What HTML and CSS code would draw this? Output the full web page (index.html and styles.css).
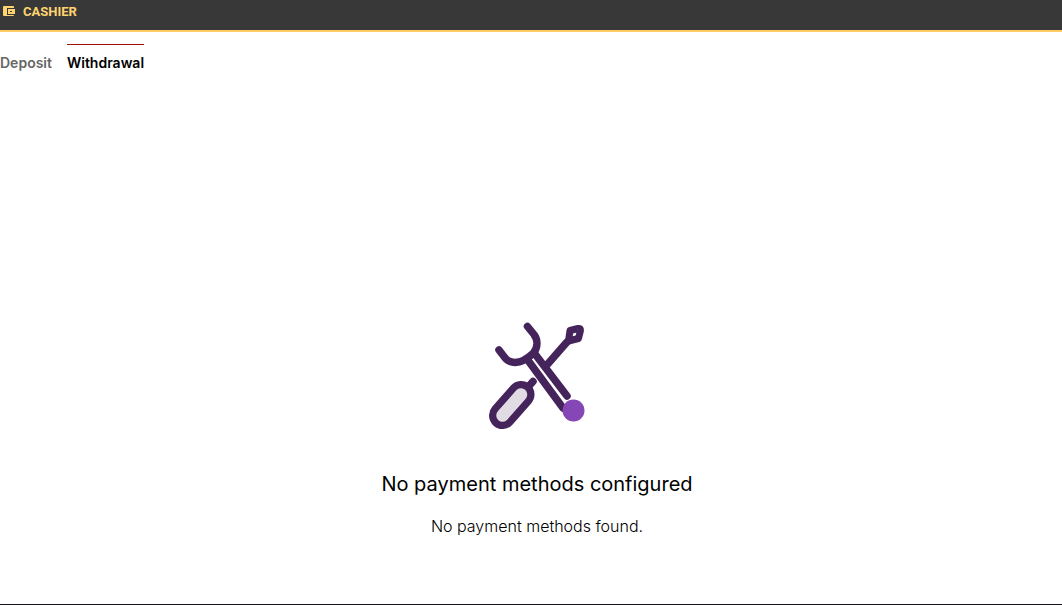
FILE: index.html
```html
<!DOCTYPE html>
<html lang="en">
<head>
    <meta charset="UTF-8">
    <meta name="viewport" content="width=device-width, initial-scale=1.0">
    <title>Cashier</title>
    <link rel="stylesheet" href="styles.css">
</head>
<body>
    <header class="header">
        <svg class="header-icon" viewBox="0 0 12 12" aria-hidden="true">
            <path fill="#ffd470" d="M1 0h9q1 0 1 1v1H4v7h7q0 1-1 1H1Q0 10 0 9V1Q0 0 1 0z"/>
            <path fill="#ffd470" fill-rule="evenodd" d="M5 3h7v5H5zM7 5v1h2V5z"/>
        </svg>
        <h1 class="header-title">CASHIER</h1>
    </header>

    <!-- Tabs -->
    <nav class="tabs">
        <a class="tab" href="#deposit">Deposit</a>
        <a class="tab active" href="#withdrawal" aria-current="page">Withdrawal</a>
    </nav>

    <!-- Empty state -->
    <main class="empty">
        <svg class="empty-icon" viewBox="9 7 96 108" aria-hidden="true">
            <g fill="none" stroke="#45235b" stroke-width="7.500" stroke-linecap="round" stroke-linejoin="round">
                <path d="M47.500 11.500L54 19.500C58 25 58 32 53.500 38C45 46 40 47 35 47.500C28 47.500 26 44 24 41.500L19 35"/>
                <path d="M47 44L83 93M55 39L87 81M66 51L87 27"/>
                <path d="M90 15.500L98 13.500Q101 13 100.500 15.500L98.500 23.500L88.500 26z" stroke-width="7"/>
                <path d="M48 72L53 66.500"/>
                <path d="M22.500 100.500L41 79.500" stroke-width="27"/>
                <path d="M22.500 100.500L41 79.500" stroke="#e1dce4" stroke-width="12.500"/>
            </g>
            <circle cx="93.500" cy="95.500" r="11" fill="#8547b5"/>
        </svg>
        <h2 class="empty-title">No payment methods configured</h2>
        <p class="empty-text">No payment methods found.</p>
    </main>
</body>
</html>
```
FILE: styles.css
```css
* {
    box-sizing: border-box;
}
body {
    display: flex;
    flex-direction: column;
    min-height: 100vh;
    margin: 0;
    border-bottom: 1px solid #161019;
    font-family: Inter, sans-serif;
    background-color: #fff;
    color: #000;
}
.header {
    display: flex;
    align-items: center;
    gap: 8px;
    padding: 4px 3px 10px;
    border-bottom: 2px solid #ffcb66;
    background-color: #383838;
}
.header-icon {
    width: 12px;
    height: 12px;
}
.header-title {
    margin: 0;
    font-family: Roboto, sans-serif;
    font-size: 13px;
    font-weight: 700;
    line-height: 16px;
    color: #ffd470;
}

/* Tabs */
.tabs {
    display: flex;
    gap: 15px;
    padding-top: 12px;
}
.tab {
    padding: 8px 0;
    border-top: 1px solid transparent;
    font-size: 14px;
    font-weight: 600;
    line-height: 20px;
    color: #666;
    text-decoration: none;
}
.tab.active {
    border-top-color: #a01008;
    color: #000;
}

/* Empty state */
.empty {
    display: flex;
    flex: 1;
    flex-direction: column;
    align-items: center;
    justify-content: flex-end;
    padding: 0 0 66px 12px;
    text-align: center;
}
.empty-icon {
    width: 96px;
    height: 108px;
}
.empty-title {
    margin: 40px 0 16px;
    font-size: 20px;
    font-weight: 400;
    line-height: 28px;
}
.empty-text {
    margin: 0;
    font-size: 16px;
    font-weight: 300;
    line-height: 24px;
}
```
